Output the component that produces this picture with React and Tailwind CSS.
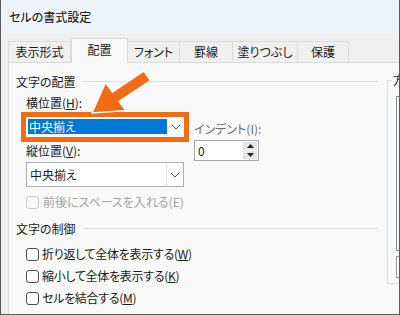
import React from "react";

const Chevron = () => (
  <svg width="10" height="6" viewBox="0 0 10 6" className="block">
    <path d="M1 1 L5 5 L9 1" fill="none" stroke="#555" strokeWidth="1" />
  </svg>
);

const Box = ({ disabled }) => (
  <div
    className={
      "w-[13px] h-[13px] rounded-[3px] border shrink-0 " +
      (disabled ? "border-[#c8c8c8] bg-[#f9f9f9]" : "border-[#4a4a4a] bg-white")
    }
  />
);

const Header = ({ children }) => (
  <div className="flex items-center h-[16px]">
    <span>{children}</span>
    <div className="flex-1 h-px bg-[#dcdcdc] ml-[7px] mt-[-1px]" />
  </div>
);

export default function App() {
  return (
    <div className="relative w-[400px] h-[315px] overflow-hidden bg-[#f0f0f0] border-l border-r border-b border-[#5a5a5a] text-[12px] leading-[16px] text-[#1a1a1a] font-['Noto_Sans_CJK_JP',sans-serif] [font-feature-settings:'palt']">
      {/* title bar */}
      <div className="h-[33px] bg-[#eef2f9] flex items-center pl-[8px] pt-[1px] text-black">
        セルの書式設定
      </div>

      {/* tabs */}
      <div className="flex items-end h-[29px] pl-[7px]">
        {[
          ["表示形式", 63],
          ["配置", 57],
          ["フォント", 53],
          ["罫線", 54],
          ["塗りつぶし", 66],
          ["保護", 52],
        ].map(([t, w], i) =>
          i === 1 ? (
            <div
              key={t}
              style={{ width: w }}
              className="relative z-10 h-[25px] -mb-px bg-[#f9f9f9] border border-b-0 border-[#d9d9d9] flex items-center justify-center pb-[2px]"
            >
              {t}
            </div>
          ) : (
            <div
              key={t}
              style={{ width: w }}
              className="h-[21px] bg-[#f0f0f0] border border-b-0 border-[#dadada] -ml-px first:ml-0 flex items-center justify-center"
            >
              {t}
            </div>
          )
        )}
      </div>

      {/* panel */}
      <div className="ml-[7px] h-[260px] bg-[#f9f9f9] border-l border-t border-[#d9d9d9] flex">
        <div className="w-[369px] shrink-0 pl-[7px] pt-[11px]">
          <Header>文字の配置</Header>

          <div className="ml-[10px] mt-[5px]">
            <div className="h-[16px]">
              横位置(<span className="underline">H</span>):
            </div>
            <div className="flex">
              <div className="flex flex-col">
                <div className="ml-[-5px] mt-[1px] w-[168px] h-[30px] border-[5px] border-[#f36b12] bg-white flex">
                  <div className="flex-1 pl-[2px] pt-[2px] pb-[3px]">
                    <div className="h-[15px] bg-[#0078d7] text-white pl-[1px] leading-[15px]">
                      中央揃え
                    </div>
                  </div>
                  <div className="w-[17px] flex items-center justify-center">
                    <Chevron />
                  </div>
                </div>
                <div className="mt-[1px] h-[16px]">
                  縦位置(<span className="underline">V</span>):
                </div>
                <div className="mt-[3px] w-[158px] h-[25px] border border-[#adadad] bg-white flex">
                  <div className="flex-1 pl-[3px] flex items-center">中央揃え</div>
                  <div className="w-[17px] border-l border-[#e3e3e3] flex items-center justify-center">
                    <Chevron />
                  </div>
                </div>
              </div>

              <div className="ml-[5px] mt-[10px] flex flex-col">
                <div className="h-[16px] text-[#6d6d6d]">インデント(I):</div>
                <div className="mt-[3px] w-[65px] h-[21px] border border-[#a8a8a8] bg-white flex">
                  <div className="flex-1 pl-[3px] flex items-center">0</div>
                  <div className="w-[16px] flex flex-col p-[1px] gap-[1px]">
                    <div className="flex-1 bg-[#e6e6e6] flex items-center justify-center">
                      <svg width="7" height="4" viewBox="0 0 7 4">
                        <path d="M0 4 L3.5 0 L7 4 Z" fill="#222" />
                      </svg>
                    </div>
                    <div className="flex-1 bg-[#e6e6e6] flex items-center justify-center">
                      <svg width="7" height="4" viewBox="0 0 7 4">
                        <path d="M0 0 L3.5 4 L7 0 Z" fill="#222" />
                      </svg>
                    </div>
                  </div>
                </div>
              </div>
            </div>

            <div className="mt-[7px] flex items-center gap-[4px] h-[16px] text-[#a3a3a3]">
              <Box disabled />
              <span>前後にスペースを入れる(E)</span>
            </div>
          </div>

          <div className="mt-[11px]">
            <Header>文字の制御</Header>
          </div>

          <div className="ml-[10px] mt-[9px] flex flex-col gap-[6px] tracking-[-0.3px]">
            <div className="flex items-center gap-[3px] h-[16px]">
              <Box />
              <span>
                折り返して全体を表示する(<span className="underline">W</span>)
              </span>
            </div>
            <div className="flex items-center gap-[3px] h-[16px]">
              <Box />
              <span>
                縮小して全体を表示する(<span className="underline">K</span>)
              </span>
            </div>
            <div className="flex items-center gap-[3px] h-[16px]">
              <Box />
              <span>
                セルを結合する(<span className="underline">M</span>)
              </span>
            </div>
          </div>
        </div>

        {/* right group (方向) */}
        <div className="relative ml-[9px] mt-[17px] h-[204px] w-[40px] shrink-0 border-l border-t border-b border-[#dcdcdc]">
          <div className="absolute left-[4px] top-[-9px] px-[1px] bg-[#f9f9f9]">方向</div>
          <div className="ml-[8px] mt-[15px] h-[155px] border-l border-t border-b border-[#868b92]" />
          <div className="ml-[8px] mt-[5px] h-[22px] border-l border-t border-b border-[#9a9a9a] flex items-center pl-[3px]">
            <div className="w-[3px] h-[8px] bg-[#f5a623]" />
          </div>
        </div>
      </div>

      {/* annotation arrow */}
      <svg className="absolute left-0 top-0 pointer-events-none" width="400" height="315">
        <path
          d="M91 113 L104.5 82.5 L111.5 92 L143 71 L149.5 80.5 L118 101.5 L125 110.5 Z"
          fill="#f36b12"
          stroke="#ffffff"
          strokeWidth="1.5"
          strokeLinejoin="miter"
        />
      </svg>
    </div>
  );
}
